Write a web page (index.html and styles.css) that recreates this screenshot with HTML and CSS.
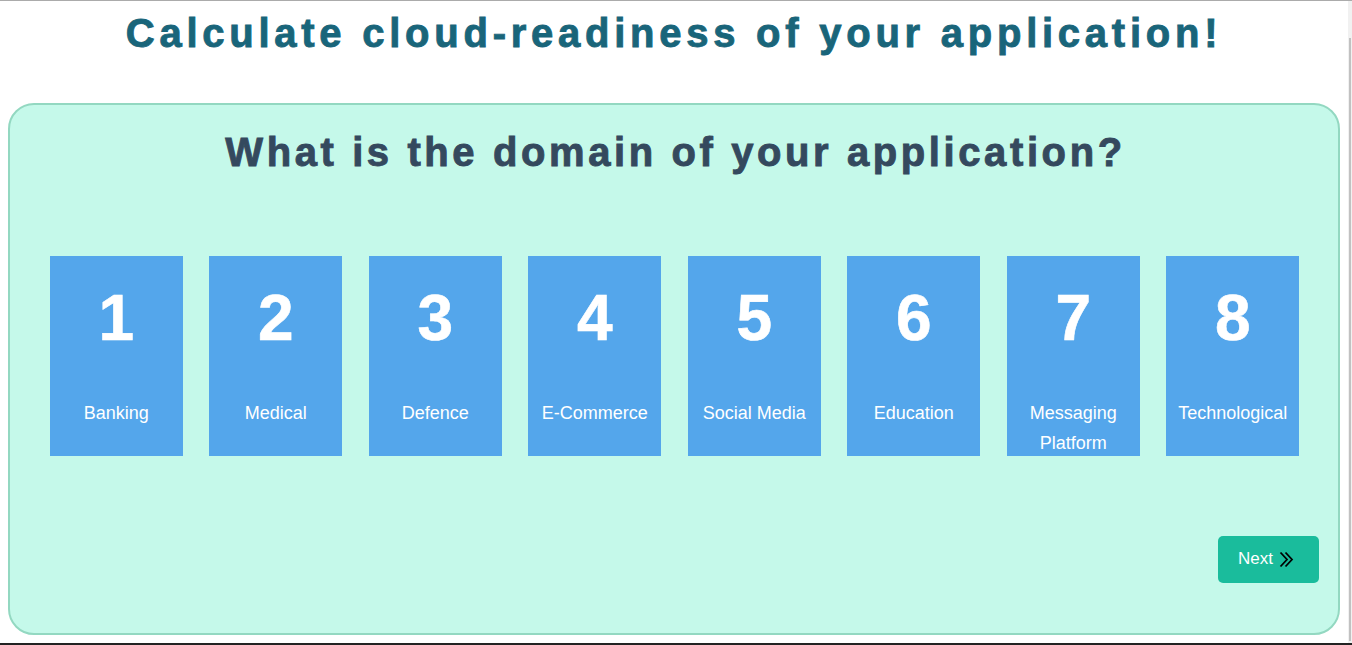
FILE: index.html
```html
<!DOCTYPE html>
<html lang="en">
<head>
<meta charset="utf-8">
<title>Cloud readiness</title>
<link rel="stylesheet" href="styles.css">
</head>
<body>
<div class="page">
  <h1 class="title">Calculate cloud-readiness of your application!</h1>
  <section class="panel">
    <h2 class="question">What is the domain of your application?</h2>
    <div class="options">
      <div class="option"><div class="num">1</div><div class="label">Banking</div></div>
      <div class="option"><div class="num">2</div><div class="label">Medical</div></div>
      <div class="option"><div class="num">3</div><div class="label">Defence</div></div>
      <div class="option"><div class="num">4</div><div class="label">E-Commerce</div></div>
      <div class="option"><div class="num">5</div><div class="label">Social Media</div></div>
      <div class="option"><div class="num">6</div><div class="label">Education</div></div>
      <div class="option"><div class="num">7</div><div class="label">Messaging Platform</div></div>
      <div class="option"><div class="num">8</div><div class="label">Technological</div></div>
    </div>
    <div class="actions">
      <button class="next">Next
        <svg class="chev" width="15" height="17" viewBox="0 0 15 17" aria-hidden="true">
          <path d="M1.5 1.5 L8 8.5 L1.5 15.5" fill="none" stroke="#000" stroke-width="1.8"/>
          <path d="M6.5 1.5 L13 8.5 L6.5 15.5" fill="none" stroke="#000" stroke-width="1.8"/>
        </svg>
      </button>
    </div>
  </section>
</div>
<div class="sb-track"><div class="sb-thumb"></div></div>
<div class="bottom-strip"></div>
</body>
</html>
```

FILE: styles.css
```css
html, body {
  margin: 0;
  padding: 0;
  background: #ffffff;
  height: 645px;
  overflow: hidden;
}

body {
  font-family: "Liberation Sans", Arial, sans-serif;
  border-top: 1px solid #ababab;
  box-sizing: border-box;
}

.page {
  padding: 0 12px 0 8px;
}

.title {
  margin: 0;
  padding-top: 9px;
  font-size: 40px;
  line-height: 46px;
  font-weight: 700;
  letter-spacing: 4.75px;
  -webkit-text-stroke: 0.9px #19657a;
  text-align: center;
  color: #19657a;
}

.panel {
  margin-top: 47px;
  height: 532px;
  box-sizing: border-box;
  background: #c5f9ea;
  border: 2px solid #93d8c1;
  border-radius: 26px;
  padding: 24px 19px 0 0;
  display: flex;
  flex-direction: column;
}

.question {
  margin: 0;
  padding-left: 22px;
  font-size: 40px;
  line-height: 46px;
  font-weight: 700;
  letter-spacing: 3.6px;
  -webkit-text-stroke: 0.9px #34495e;
  text-align: center;
  color: #34495e;
}

.options {
  margin-top: 81px;
  padding-left: 20px;
  display: flex;
  justify-content: center;
  gap: 26.5px;
}

.option {
  width: 133px;
  height: 200px;
  background: #54a6eb;
  color: #ffffff;
  text-align: center;
  box-sizing: border-box;
  padding-top: 30px;
}

.num {
  font-size: 64px;
  line-height: 64px;
  font-weight: 700;
  -webkit-text-stroke: 0.6px #ffffff;
}

.label {
  margin-top: 48px;
  font-size: 18px;
  line-height: 30px;
  padding: 0 6px;
}

.actions {
  margin-top: 80px;
  display: flex;
  justify-content: flex-end;
}

.next {
  width: 101px;
  height: 47px;
  border: none;
  border-radius: 5px;
  background: #1abc9c;
  color: #ffffff;
  font-family: "Liberation Sans", Arial, sans-serif;
  font-size: 17px;
  display: flex;
  align-items: center;
  justify-content: center;
  gap: 6px;
  padding: 0 5px 2px 0;
}

.chev {
  display: block;
  margin-top: 2px;
}

.sb-track {
  position: fixed;
  top: 1px;
  right: 0;
  width: 4px;
  height: 643px;
  background: #f1f1f1;
}

.sb-thumb {
  margin-top: 37px;
  margin-left: 1px;
  width: 2px;
  height: 603px;
  background: #c1c1c1;
}

.bottom-strip {
  position: fixed;
  left: 0;
  bottom: 0;
  width: 100%;
  height: 2px;
  background: #222222;
}
```
